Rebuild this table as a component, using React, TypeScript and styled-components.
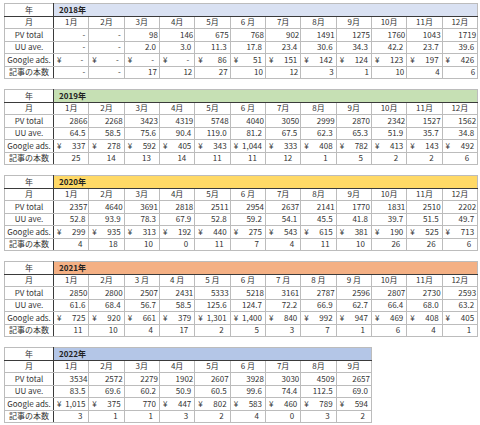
import styled, { createGlobalStyle } from "styled-components";

const GlobalStyle = createGlobalStyle`
  html, body {
    margin: 0;
    background: #fff;
  }
  body {
    padding: 3px 0 0 4px;
    font-family: "Noto Sans CJK JP", "Noto Sans", sans-serif;
    color: #333;
  }
`;

interface YearData {
  year: string;
  color: string;
  pv: string[];
  uu: string[];
  ads: string[];
  posts: string[];
  postPad: number;
}

const MONTHS = [
  "1月", "2月", "3月", "4月", "5月", "6 月",
  "7月", "8月", "9月", "10月", "11月", "12月",
];
const MONTHS_2021 = [
  "1月", "2月", "3 月", "4 月", "5 月", "6 月",
  "7 月", "8 月", "9 月", "10月", "11月", "12月",
];

const years: YearData[] = [
  {
    year: "2018年",
    color: "#d9e1f2",
    pv: ["-", "-", "98", "146", "675", "768", "902", "1491", "1275", "1760", "1043", "1719"],
    uu: ["-", "-", "2.0", "3.0", "11.3", "17.8", "23.4", "30.6", "34.3", "42.2", "23.7", "39.6"],
    ads: ["¥-", "¥-", "¥-", "¥-", "¥86", "¥51", "¥151", "¥142", "¥124", "¥123", "¥197", "¥426"],
    posts: ["-", "-", "17", "12", "27", "10", "12", "3", "1", "10", "4", "6"],
    postPad: 2,
  },
  {
    year: "2019年",
    color: "#c6e0b4",
    pv: ["2866", "2268", "3423", "4319", "5748", "4040", "3050", "2999", "2870", "2342", "1527", "1562"],
    uu: ["64.5", "58.5", "75.6", "90.4", "119.0", "81.2", "67.5", "62.3", "65.3", "51.9", "35.7", "34.8"],
    ads: ["¥337", "¥278", "¥592", "¥405", "¥343", "¥1,044", "¥333", "¥408", "¥782", "¥413", "¥143", "¥492"],
    posts: ["25", "14", "13", "14", "11", "11", "12", "1", "5", "2", "2", "6"],
    postPad: 8,
  },
  {
    year: "2020年",
    color: "#ffd966",
    pv: ["2357", "4640", "3691", "2818", "2511", "2954", "2637", "2141", "1770", "1831", "2510", "2202"],
    uu: ["52.8", "93.9", "78.3", "67.9", "52.8", "59.2", "54.1", "45.5", "41.8", "39.7", "51.5", "49.7"],
    ads: ["¥299", "¥935", "¥313", "¥192", "¥440", "¥275", "¥543", "¥615", "¥381", "¥190", "¥525", "¥713"],
    posts: ["4", "18", "10", "0", "11", "7", "4", "11", "10", "26", "26", "6"],
    postPad: 6,
  },
  {
    year: "2021年",
    color: "#f4b084",
    pv: ["2850", "2800", "2507", "2431", "5333", "5218", "3161", "2787", "2596", "2807", "2730", "2593"],
    uu: ["61.6", "68.4", "56.7", "58.5", "125.6", "124.7", "72.2", "66.9", "62.7", "66.4", "68.0", "63.2"],
    ads: ["¥725", "¥920", "¥661", "¥379", "¥1,301", "¥1,400", "¥840", "¥992", "¥947", "¥469", "¥408", "¥405"],
    posts: ["11", "10", "4", "17", "2", "5", "3", "7", "1", "6", "4", "1"],
    postPad: 6,
  },
  {
    year: "2022年",
    color: "#b4c6e7",
    pv: ["3534", "2572", "2279", "1902", "2607", "3928", "3030", "4509", "2657"],
    uu: ["83.5", "69.6", "60.2", "50.9", "60.5", "99.6", "74.4", "112.5", "69.0"],
    ads: ["¥1,015", "¥375", "770", "¥447", "¥802", "¥583", "¥460", "¥789", "¥594"],
    posts: ["3", "1", "1", "3", "2", "4", "0", "3", "2"],
    postPad: 6,
  },
];

const LABEL_W = 49;
const COL_W = 35.33;

const Sheet = styled.div`
  display: flex;
  flex-direction: column;
  gap: 10px;
  align-items: flex-start;
`;

const Table = styled.table<{ $cols: number }>`
  border-collapse: collapse;
  table-layout: fixed;
  width: ${(p) => LABEL_W + p.$cols * COL_W}px;
  border: 1px solid #3a3a3a;
  font-size: 8px;
  line-height: 1;

  tr {
    height: 12.5px;
  }
`;

const Cell = styled.td`
  border: 1px solid #bcbcbc;
  padding: 0 1px;
  white-space: nowrap;
  overflow: hidden;
  vertical-align: middle;
`;

const LabelCell = styled(Cell)`
  text-align: center;
  border-right: 1px solid #3a3a3a;
`;

const YearLabel = styled(LabelCell)`
  border-bottom: 1px solid #3a3a3a;
`;

const YearHead = styled(Cell)<{ $bg: string }>`
  background: ${(p) => p.$bg};
  font-weight: 700;
  padding-left: 5px;
  border-bottom: 1px solid #3a3a3a;
  color: #222;
`;

const MonthCell = styled(Cell)`
  text-align: center;
`;

const NumCell = styled(Cell)<{ $pad: number }>`
  text-align: right;
  padding-right: ${(p) => p.$pad}px;
`;

const YenCell = styled(Cell)`
  padding: 0 3px 0 3px;
`;

const YenBox = styled.div`
  display: flex;
  justify-content: space-between;
`;

const Dash = styled.span`
  padding-right: 2px;
`;

const YearTable = ({ data }: { data: YearData }) => {
  const n = data.pv.length;
  const months = data.year === "2021年" ? MONTHS_2021 : MONTHS;
  return (
    <Table $cols={n}>
      <colgroup>
        <col style={{ width: LABEL_W }} />
        {data.pv.map((_, i) => (
          <col key={i} style={{ width: COL_W }} />
        ))}
      </colgroup>
      <tbody>
        <tr>
          <YearLabel>年</YearLabel>
          <YearHead $bg={data.color} colSpan={n}>
            {data.year}
          </YearHead>
        </tr>
        <tr>
          <LabelCell>月</LabelCell>
          {months.slice(0, n).map((m) => (
            <MonthCell key={m}>{m}</MonthCell>
          ))}
        </tr>
        <tr>
          <LabelCell>PV total</LabelCell>
          {data.pv.map((v, i) => (
            <NumCell key={i} $pad={v === "-" ? 3 : 1}>
              {v}
            </NumCell>
          ))}
        </tr>
        <tr>
          <LabelCell>UU ave.</LabelCell>
          {data.uu.map((v, i) => (
            <NumCell key={i} $pad={3}>
              {v}
            </NumCell>
          ))}
        </tr>
        <tr>
          <LabelCell>Google ads.</LabelCell>
          {data.ads.map((v, i) => {
            const yen = v.startsWith("¥");
            const num = yen ? v.slice(1) : v;
            return (
              <YenCell key={i}>
                <YenBox>
                  <span>{yen ? "¥" : ""}</span>
                  {num === "-" ? <Dash>-</Dash> : <span>{num}</span>}
                </YenBox>
              </YenCell>
            );
          })}
        </tr>
        <tr>
          <LabelCell>記事の本数</LabelCell>
          {data.posts.map((v, i) => (
            <NumCell key={i} $pad={v === "-" ? 3 : data.postPad}>
              {v}
            </NumCell>
          ))}
        </tr>
      </tbody>
    </Table>
  );
};

export default function App() {
  return (
    <>
      <GlobalStyle />
      <Sheet>
        {years.map((y) => (
          <YearTable key={y.year} data={y} />
        ))}
      </Sheet>
    </>
  );
}
